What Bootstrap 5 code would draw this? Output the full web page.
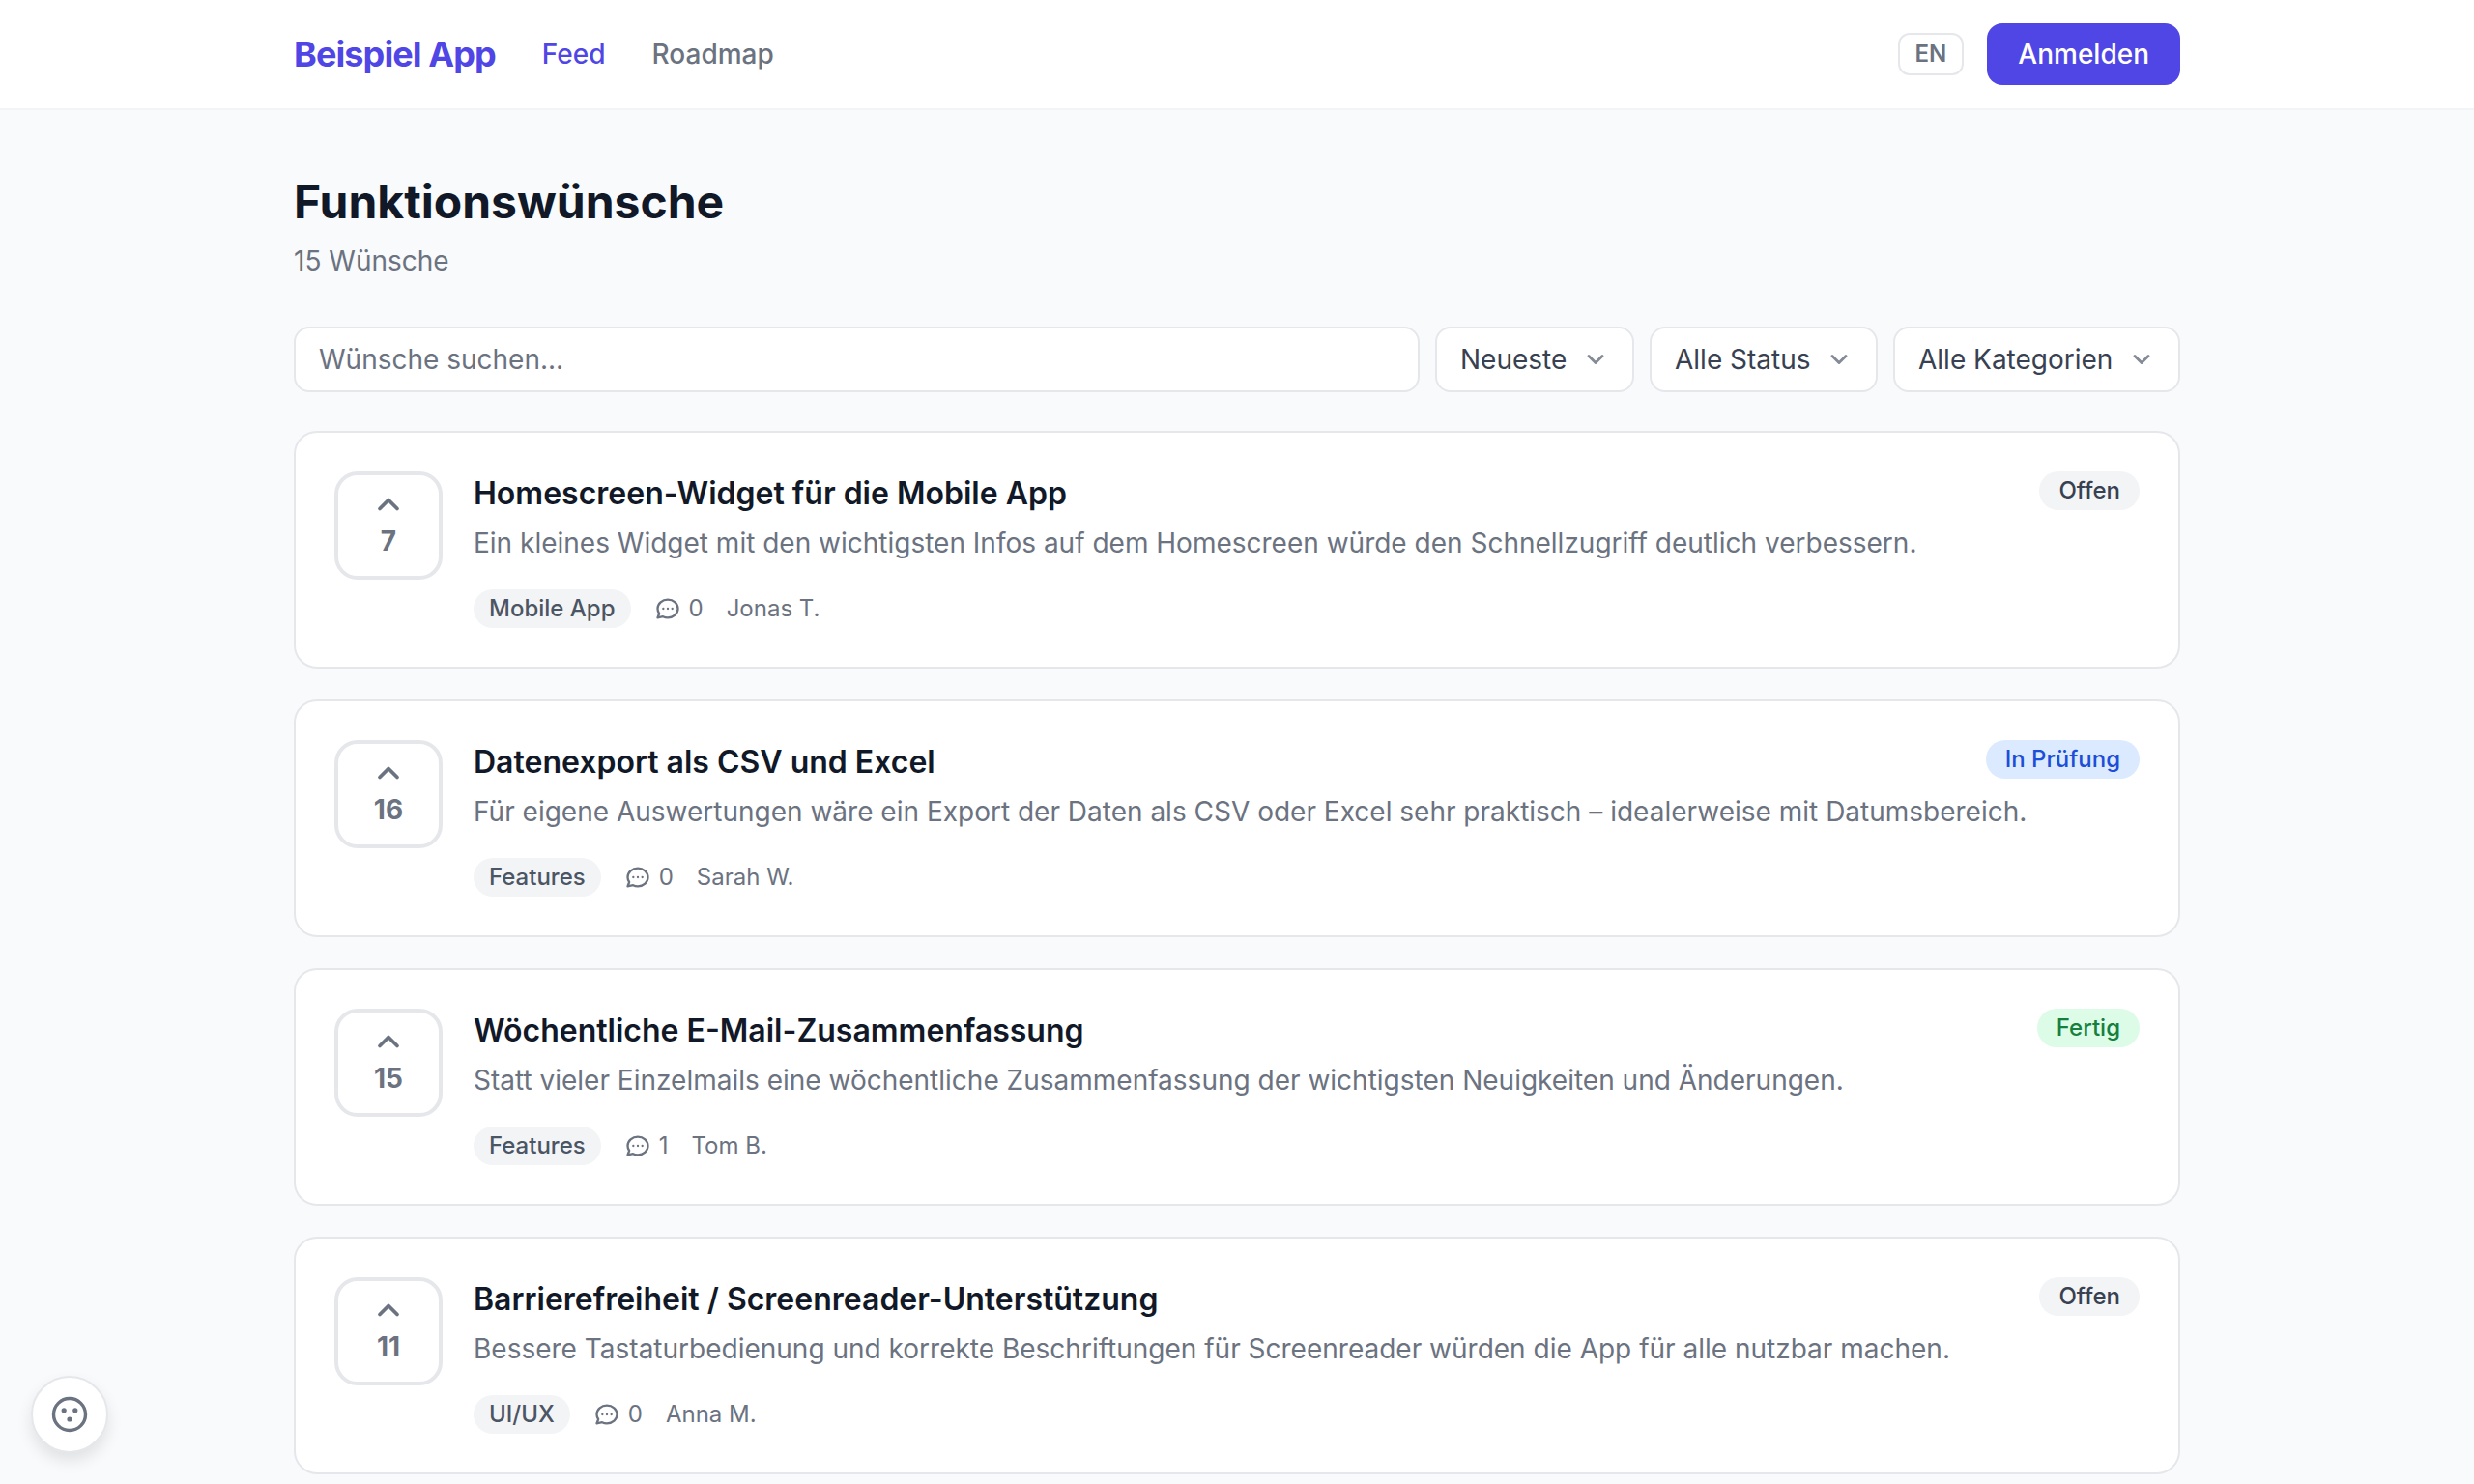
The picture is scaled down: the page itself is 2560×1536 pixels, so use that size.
<!DOCTYPE html>
<html lang="de">
<head>
<meta charset="utf-8">
<meta name="viewport" content="width=device-width, initial-scale=1">
<title>Beispiel App – Funktionswünsche</title>
<link href="https://cdn.jsdelivr.net/npm/bootstrap@5.3.0/dist/css/bootstrap.min.css" rel="stylesheet">
<style>
:root{--brand:#4f46e5;--g50:#f9fafc;--g100:#f3f4f6;--g200:#e5e7eb;--g500:#6b7280;--g600:#4b5563;--g700:#374151;--g900:#111827}
body{background:var(--g50);color:var(--g900);font-family:Inter,"Liberation Sans",sans-serif;font-size:28px;line-height:40px}
.page-wrap{max-width:2048px;padding:0 48px}
.topbar{background:#fff;border-bottom:2px solid var(--g100);padding:24px 0}
.topbar .navbar-brand{font-size:36px;line-height:56px;font-weight:700;color:var(--brand);margin:0;letter-spacing:-.025em}
.topbar .nav-link{padding:0;font-weight:500;color:var(--g500)}
.topbar .nav-link.active{color:var(--brand)}
.gap-nav{gap:48px}
.gap-bar{gap:24px}
.gap-tools{gap:16px}
.lang-btn{border:2px solid var(--g200);border-radius:12px;padding:4px 16px;font-size:24px;line-height:32px;font-weight:600;color:var(--g500)}
.login-btn{--bs-btn-bg:var(--brand);--bs-btn-border-color:var(--brand);--bs-btn-hover-bg:#4338ca;border:0;border-radius:16px;padding:12px 32px;font-size:28px;line-height:40px;font-weight:500}
.page-main{padding:64px 0}
.page-title{font-size:48px;line-height:62px;font-weight:700;margin:0}
.page-count{color:var(--g500);margin:10px 0 0}
.toolbar{margin:48px 0 40px}
.toolbar .form-control,.toolbar .form-select{height:68px;border:2px solid var(--g200);border-radius:16px;font-size:28px;line-height:40px;padding:12px 24px;color:var(--g700);background-color:#fff}
.toolbar .form-control::placeholder{color:var(--g500)}
.toolbar .form-select{width:auto;padding-right:67px;background-size:28px 28px;background-position:right 24px center;background-image:url("data:image/svg+xml,%3Csvg xmlns='http://www.w3.org/2000/svg' viewBox='0 0 24 24' fill='none' stroke='%23858b96' stroke-width='2.5' stroke-linecap='round' stroke-linejoin='round'%3E%3Cpath d='M6 9l6 6 6-6'/%3E%3C/svg%3E")}
.wish-list{gap:32px}
.wish{border:2px solid var(--g200);border-radius:24px;background:#fff}
.wish .card-body{padding:40px;gap:32px}
.vote{width:112px;height:112px;padding:12px 0 0;border:4px solid var(--g200);border-radius:24px;background:#fff;color:var(--g500);font-weight:700;line-height:40px}
.vote svg{width:36px;height:36px}
.wish-head{height:52px}
.wish-title{font-size:32px;line-height:46px;font-weight:600;margin:0}
.wish-title a{color:var(--g900);text-decoration:none}
.wish-text{color:var(--g500);line-height:44px;margin:0 0 26px}
.meta{font-size:24px;line-height:32px;color:var(--g500);gap:24px}
.meta svg{width:28px;height:28px}
.chip,.status{font-size:24px;line-height:32px;font-weight:500;border-radius:20px}
.chip{padding:4px 16px;background:var(--g100);color:var(--g600)}
.status{padding:4px 20px}
.st-open{background:var(--g100);color:var(--g700)}
.st-review{background:#dbeafe;color:#1d4ed8}
.st-done{background:#dcfce7;color:#15803d}
.cookie-btn{left:32px;bottom:32px;width:80px;height:80px;border:2px solid var(--g200);border-radius:50%;background:#fff;color:var(--g500);box-shadow:0 8px 16px rgba(0,0,0,.1);z-index:10}
.cookie-btn svg{width:40px;height:40px}
</style>
</head>
<body>
<svg class="d-none" aria-hidden="true">
  <symbol id="i-up" viewBox="0 0 24 24"><path d="M6 15l6-6 6 6" fill="none" stroke="currentColor" stroke-width="2.5" stroke-linecap="round" stroke-linejoin="round"/></symbol>
  <symbol id="i-chat" viewBox="0 0 24 24"><path d="M8 12h.01M12 12h.01M16 12h.01M21 12c0 4.418-4.03 8-9 8a9.863 9.863 0 01-4.255-.949L3 20l1.395-3.72C3.512 15.042 3 13.574 3 12c0-4.418 4.03-8 9-8s9 3.582 9 8z" fill="none" stroke="currentColor" stroke-width="2" stroke-linecap="round" stroke-linejoin="round"/></symbol>
</svg>

<header class="topbar">
  <div class="container-fluid page-wrap d-flex align-items-center justify-content-between">
    <nav class="d-flex align-items-center gap-nav" aria-label="Hauptnavigation">
      <a class="navbar-brand" href="#">Beispiel App</a>
      <a class="nav-link active" href="#" aria-current="page">Feed</a>
      <a class="nav-link" href="#">Roadmap</a>
    </nav>
    <div class="d-flex align-items-center gap-bar">
      <button type="button" class="btn lang-btn">EN</button>
      <button type="button" class="btn btn-primary login-btn">Anmelden</button>
    </div>
  </div>
</header>

<main class="page-main">
  <div class="container-fluid page-wrap">
    <h1 class="page-title">Funktionswünsche</h1>
    <p class="page-count">15 Wünsche</p>

    <form class="toolbar d-flex gap-tools">
      <input type="search" class="form-control flex-fill" placeholder="Wünsche suchen..." aria-label="Wünsche suchen">
      <select class="form-select flex-shrink-0" aria-label="Sortierung"><option>Neueste</option></select>
      <select class="form-select flex-shrink-0" aria-label="Status"><option>Alle Status</option></select>
      <select class="form-select flex-shrink-0" aria-label="Kategorie"><option>Alle Kategorien</option></select>
    </form>

    <div class="d-flex flex-column wish-list">
      <article class="card wish">
        <div class="card-body d-flex align-items-start">
          <button type="button" class="vote flex-shrink-0 d-flex flex-column align-items-center"><svg aria-hidden="true"><use href="#i-up"/></svg><span>7</span></button>
          <div class="flex-fill">
            <div class="wish-head d-flex justify-content-between align-items-start">
              <h2 class="wish-title"><a href="#">Homescreen-Widget für die Mobile App</a></h2>
              <span class="status st-open">Offen</span>
            </div>
            <p class="wish-text">Ein kleines Widget mit den wichtigsten Infos auf dem Homescreen würde den Schnellzugriff deutlich verbessern.</p>
            <div class="meta d-flex align-items-center">
              <span class="chip">Mobile App</span>
              <span class="d-flex align-items-center gap-2"><svg aria-hidden="true"><use href="#i-chat"/></svg>0</span>
              <span>Jonas T.</span>
            </div>
          </div>
        </div>
      </article>

      <article class="card wish">
        <div class="card-body d-flex align-items-start">
          <button type="button" class="vote flex-shrink-0 d-flex flex-column align-items-center"><svg aria-hidden="true"><use href="#i-up"/></svg><span>16</span></button>
          <div class="flex-fill">
            <div class="wish-head d-flex justify-content-between align-items-start">
              <h2 class="wish-title"><a href="#">Datenexport als CSV und Excel</a></h2>
              <span class="status st-review">In Prüfung</span>
            </div>
            <p class="wish-text">Für eigene Auswertungen wäre ein Export der Daten als CSV oder Excel sehr praktisch – idealerweise mit Datumsbereich.</p>
            <div class="meta d-flex align-items-center">
              <span class="chip">Features</span>
              <span class="d-flex align-items-center gap-2"><svg aria-hidden="true"><use href="#i-chat"/></svg>0</span>
              <span>Sarah W.</span>
            </div>
          </div>
        </div>
      </article>

      <article class="card wish">
        <div class="card-body d-flex align-items-start">
          <button type="button" class="vote flex-shrink-0 d-flex flex-column align-items-center"><svg aria-hidden="true"><use href="#i-up"/></svg><span>15</span></button>
          <div class="flex-fill">
            <div class="wish-head d-flex justify-content-between align-items-start">
              <h2 class="wish-title"><a href="#">Wöchentliche E-Mail-Zusammenfassung</a></h2>
              <span class="status st-done">Fertig</span>
            </div>
            <p class="wish-text">Statt vieler Einzelmails eine wöchentliche Zusammenfassung der wichtigsten Neuigkeiten und Änderungen.</p>
            <div class="meta d-flex align-items-center">
              <span class="chip">Features</span>
              <span class="d-flex align-items-center gap-2"><svg aria-hidden="true"><use href="#i-chat"/></svg>1</span>
              <span>Tom B.</span>
            </div>
          </div>
        </div>
      </article>

      <article class="card wish">
        <div class="card-body d-flex align-items-start">
          <button type="button" class="vote flex-shrink-0 d-flex flex-column align-items-center"><svg aria-hidden="true"><use href="#i-up"/></svg><span>11</span></button>
          <div class="flex-fill">
            <div class="wish-head d-flex justify-content-between align-items-start">
              <h2 class="wish-title"><a href="#">Barrierefreiheit / Screenreader-Unterstützung</a></h2>
              <span class="status st-open">Offen</span>
            </div>
            <p class="wish-text">Bessere Tastaturbedienung und korrekte Beschriftungen für Screenreader würden die App für alle nutzbar machen.</p>
            <div class="meta d-flex align-items-center">
              <span class="chip">UI/UX</span>
              <span class="d-flex align-items-center gap-2"><svg aria-hidden="true"><use href="#i-chat"/></svg>0</span>
              <span>Anna M.</span>
            </div>
          </div>
        </div>
      </article>
    </div>
  </div>
</main>

<button type="button" class="cookie-btn position-fixed d-flex align-items-center justify-content-center p-0" aria-label="Cookie-Einstellungen">
  <svg viewBox="0 0 40 40" aria-hidden="true"><circle cx="20" cy="20" r="16.5" fill="none" stroke="currentColor" stroke-width="3.4"/><g fill="currentColor"><circle cx="14.2" cy="15.8" r="2.6"/><circle cx="25.8" cy="15.8" r="2.6"/><circle cx="20" cy="25" r="2.6"/></g></svg>
</button>
<script src="https://cdn.jsdelivr.net/npm/bootstrap@5.3.0/dist/js/bootstrap.bundle.min.js"></script>
</body>
</html>
